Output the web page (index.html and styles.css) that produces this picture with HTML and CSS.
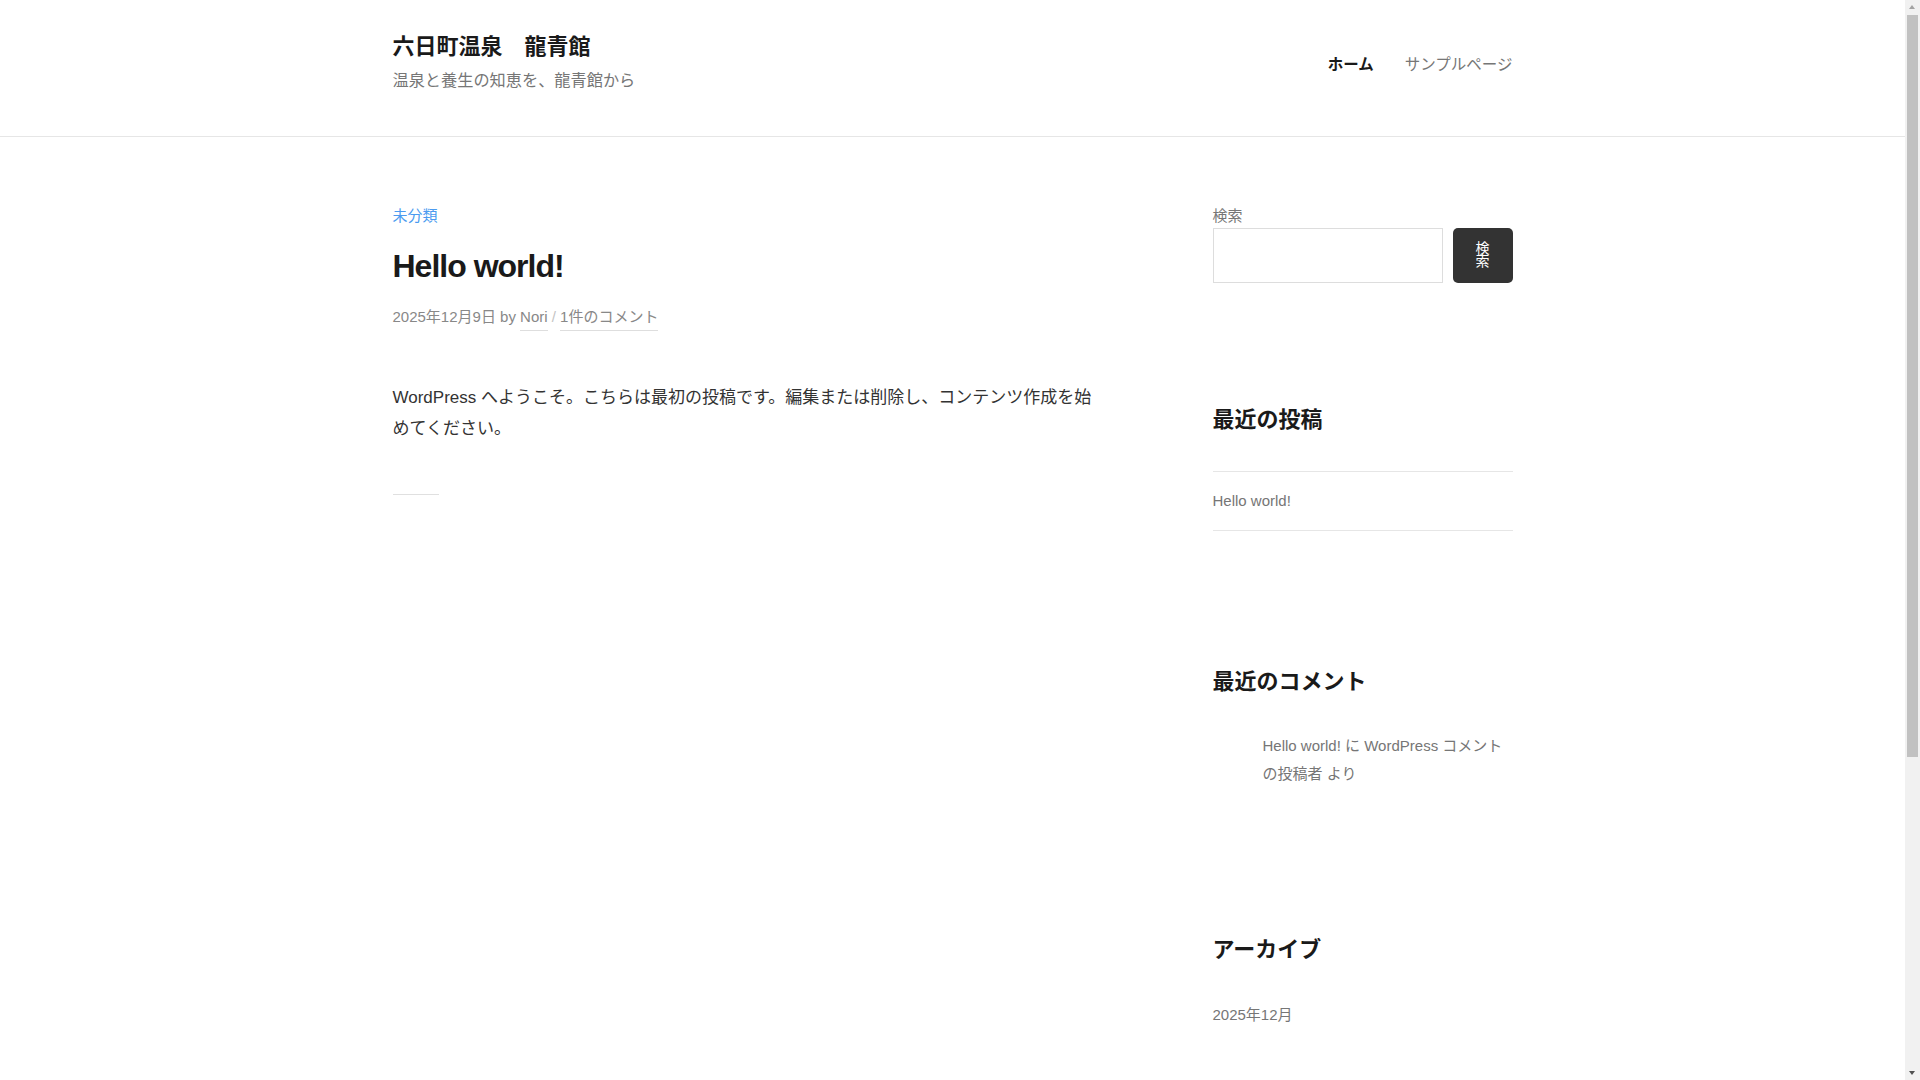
FILE: index.html
```html
<!DOCTYPE html>
<html lang="ja">

<head>
    <meta charset="UTF-8">
    <meta name="viewport" content="width=device-width, initial-scale=1.0">
    <title>六日町温泉　龍青館</title>
    <link rel="stylesheet" href="styles.css">
</head>

<body>
    <header class="site-header">
        <div class="wrap header-inner">
            <div class="branding">
                <p class="site-title"><a href="#">六日町温泉　龍青館</a></p>
                <p class="site-desc">温泉と養生の知恵を、龍青館から</p>
            </div>
            <nav class="main-nav">
                <a href="#" class="current">ホーム</a>
                <a href="#">サンプルページ</a>
            </nav>
        </div>
    </header>

    <div class="wrap site-main">
        <main class="content">
            <article class="post">
                <div class="cat-links"><a href="#">未分類</a></div>
                <h1 class="entry-title">Hello world!</h1>
                <div class="entry-meta">
                    2025年12月9日 by <a href="#">Nori</a> <span class="sep">/</span> <a href="#">1件のコメント</a>
                </div>
                <div class="entry-body">
                    <p>WordPress へようこそ。こちらは最初の投稿です。編集または削除し、コンテンツ作成を始めてください。</p>
                </div>
                <hr class="post-end">
            </article>
        </main>

        <aside class="sidebar">
            <section class="widget search-widget">
                <label class="search-label" for="s">検索</label>
                <form class="search-form">
                    <input type="text" id="s" class="search-field">
                    <button type="button" class="search-btn">検索</button>
                </form>
            </section>

            <section class="widget">
                <h2 class="widget-title">最近の投稿</h2>
                <ul class="widget-list lined">
                    <li><a href="#">Hello world!</a></li>
                </ul>
            </section>

            <section class="widget">
                <h2 class="widget-title">最近のコメント</h2>
                <ul class="widget-list comments">
                    <li><a href="#">Hello world!</a> に <a href="#">WordPress コメントの投稿者</a> より</li>
                </ul>
            </section>

            <section class="widget">
                <h2 class="widget-title">アーカイブ</h2>
                <ul class="widget-list">
                    <li><a href="#">2025年12月</a></li>
                </ul>
            </section>

            <section class="widget">
                <h2 class="widget-title">カテゴリー</h2>
                <ul class="widget-list">
                    <li><a href="#">未分類</a></li>
                </ul>
            </section>
        </aside>
    </div>

    <footer class="site-footer">
        <div class="wrap">
            <a href="#">Proudly powered by WordPress</a>
        </div>
    </footer>

    <!-- window scrollbar as in the screenshot -->
    <div class="fake-scrollbar" aria-hidden="true">
        <span class="sb-up"></span>
        <span class="sb-thumb"></span>
        <span class="sb-down"></span>
    </div>
</body>

</html>
```

FILE: styles.css
```css
html {
    background-color: #fff;
}

body {
    margin: 0 15px 0 0;
    font-family: "Liberation Sans", "Noto Sans CJK JP", sans-serif;
    color: #1a1a1a;
    background-color: #fff;
}

a {
    color: inherit;
    text-decoration: none;
}

p {
    margin: 0;
}

.wrap {
    max-width: 1120px;
    margin: 0 auto;
}

/* header */
.site-header {
    border-bottom: 1px solid #e6e6e6;
}

.header-inner {
    display: flex;
    justify-content: space-between;
    align-items: center;
    padding: 32px 0 42px;
}

.site-title {
    font-size: 22px;
    font-weight: 700;
    line-height: 1.4;
}

.site-desc {
    margin-top: 5px;
    font-size: 16.2px;
    line-height: 1.6;
    color: #767676;
}

.main-nav {
    display: flex;
    gap: 31px;
    font-size: 15.5px;
    line-height: 1.6;
    margin-top: 5px;
}

.main-nav a {
    color: #767676;
}

.main-nav a.current {
    color: #1a1a1a;
    font-weight: 700;
}

/* main */
.site-main {
    display: flex;
    justify-content: space-between;
    padding: 67px 0 104px;
}

.content {
    width: 708px;
}

.cat-links {
    font-size: 15px;
    line-height: 1.6;
}

.cat-links a {
    color: #4b9bf0;
}

.entry-title {
    margin: 18px 0 0;
    font-size: 32px;
    line-height: 1.25;
    font-weight: 700;
    letter-spacing: -1px;
}

.entry-meta {
    margin-top: 19px;
    font-size: 15px;
    line-height: 1.6;
    color: #888;
}

.entry-meta a {
    border-bottom: 1px solid #dedede;
    padding-bottom: 5px;
}

.entry-meta .sep {
    color: #c4c4c4;
}

.entry-body {
    margin-top: 53px;
    font-size: 17px;
    line-height: 31px;
    color: #333;
}

.post-end {
    width: 46px;
    margin: 50px 0 0;
    border: 0;
    border-top: 1px solid #e0e0e0;
}

/* sidebar */
.sidebar {
    width: 300px;
}

.widget {
    margin-bottom: 120px;
}

.search-widget {
    margin-bottom: 122px;
}

.search-label {
    display: block;
    font-size: 15px;
    line-height: 1.6;
    color: #767676;
}

.search-form {
    display: flex;
    gap: 10px;
}

.search-field {
    width: 230px;
    height: 55px;
    box-sizing: border-box;
    border: 1px solid #ddd;
    margin: 0;
    padding: 0 10px;
    font-size: 15px;
}

.search-btn {
    width: 60px;
    height: 55px;
    padding: 0 22px;
    border: 0;
    border-radius: 5px;
    background-color: #333;
    color: #fff;
    font-family: "Liberation Sans", "Noto Sans CJK JP", sans-serif;
    font-size: 14px;
    line-height: 13px;
    cursor: pointer;
}

.widget-title {
    margin: 0 0 35px;
    font-size: 22px;
    line-height: 1.4;
    font-weight: 700;
}

.widget-list {
    list-style: none;
    margin: 0;
    padding: 0;
    font-size: 15px;
    line-height: 28px;
    color: #767676;
}

.widget-list.lined {
    padding-bottom: 16px;
}

.widget-list.lined li {
    padding: 15px 0;
    border-top: 1px solid #e6e6e6;
    border-bottom: 1px solid #e6e6e6;
}

.widget-list.comments li {
    padding: 0 0 27px 50px;
}

/* footer */
.site-footer {
    border-top: 1px solid #e6e6e6;
    padding: 40px 0 50px;
    font-size: 15px;
    color: #767676;
}

/* scrollbar drawn over the right edge */
.fake-scrollbar {
    position: fixed;
    top: 0;
    right: 0;
    width: 15px;
    height: 100vh;
    background-color: #f1f1f1;
}

.sb-thumb {
    position: absolute;
    top: 15px;
    left: 2px;
    width: 11px;
    height: 742px;
    background-color: #c1c1c1;
}

.sb-up,
.sb-down {
    position: absolute;
    left: 4px;
    width: 0;
    height: 0;
    border-left: 3.5px solid transparent;
    border-right: 3.5px solid transparent;
}

.sb-up {
    top: 5px;
    border-bottom: 4px solid #a3a3a3;
}

.sb-down {
    bottom: 5px;
    border-top: 4px solid #505050;
}
```
